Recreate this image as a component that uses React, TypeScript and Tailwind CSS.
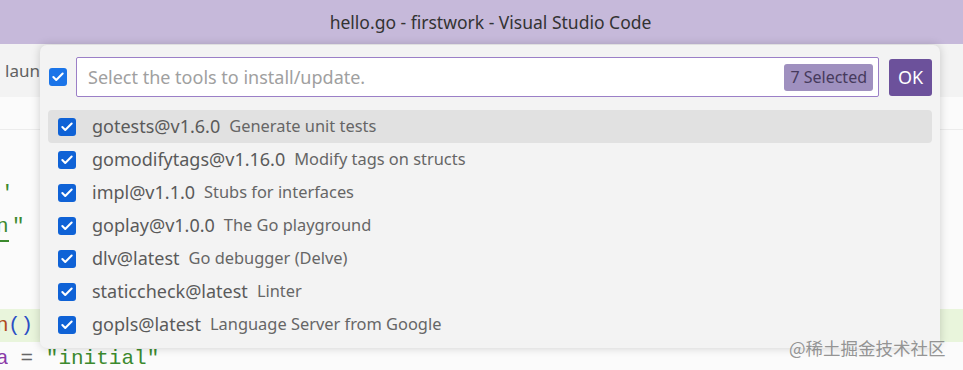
import { Check } from 'lucide-react';

const tools = [
  { name: 'gotests@v1.6.0', desc: 'Generate unit tests' },
  { name: 'gomodifytags@v1.16.0', desc: 'Modify tags on structs' },
  { name: 'impl@v1.1.0', desc: 'Stubs for interfaces' },
  { name: 'goplay@v1.0.0', desc: 'The Go playground' },
  { name: 'dlv@latest', desc: 'Go debugger (Delve)' },
  { name: 'staticcheck@latest', desc: 'Linter' },
  { name: 'gopls@latest', desc: 'Language Server from Google' },
];

function Box({ bright = false }: { bright?: boolean }) {
  return (
    <div
      className={`w-[18px] h-[18px] rounded-[3px] flex items-center justify-center shrink-0 ${
        bright ? 'bg-[#1a74e8]' : 'bg-[#0f62d6]'
      }`}
    >
      <Check size={14} strokeWidth={3.5} className="text-white" />
    </div>
  );
}

function QuickPick() {
  return (
    <div className="absolute left-[40px] top-[45px] w-[900px] h-[303px] rounded-[7px] bg-[#f3f3f3] shadow-[0_0_10px_rgba(0,0,0,0.18)] px-[8px]">
      <div className="flex items-center h-[40px] mt-[12px]">
        <div className="ml-[1px] mr-[9px]">
          <Box bright />
        </div>
        <div className="flex-1 h-[40px] bg-white border border-[#9b7fc7] rounded-[2px] flex items-center pl-[11px] pr-[5px]">
          <span className="flex-1 text-[18px] text-[#a0a0a0]">Select the tools to install/update.</span>
          <span className="h-[27px] px-[6px] rounded-[3px] bg-[#9f90bf] text-[#463a5c] text-[16px] flex items-center">
            7 Selected
          </span>
        </div>
        <button className="ml-[10px] w-[43px] h-[37px] rounded-[3px] bg-[#6c519b] text-white text-[18px] flex items-center justify-center">
          OK
        </button>
      </div>
      <div className="mt-[13px] flex flex-col">
        {tools.map((t, i) => (
          <div
            key={t.name}
            className={`flex items-center h-[33px] rounded-[4px] pl-[10px] ${i === 0 ? 'bg-[#e1e1e1]' : ''}`}
          >
            <Box />
            <span className="ml-[16px] text-[18px] text-[#5a5a5a]">{t.name}</span>
            <span className="ml-[9px] text-[16.4px] text-[#666666]">{t.desc}</span>
          </div>
        ))}
      </div>
    </div>
  );
}

export default function App() {
  return (
    <div className="relative w-[963px] h-[370px] overflow-hidden bg-[#fbfbfb] font-['Noto_Sans',sans-serif]">
      <div className="h-[44px] bg-[#c6b9da] flex items-center justify-center text-[17.5px] text-[#333333] pl-[18px]">
        hello.go - firstwork - Visual Studio Code
      </div>
      <div className="h-[53px] bg-[#f3f3f3] flex items-center pl-[5px] text-[17px] text-[#616161]">laun</div>
      <div className="h-[33px] border-b border-[#ececec]" />
      <div className="font-['Liberation_Mono',monospace] text-[21px] leading-[33px]">
        <div className="h-[33px] mt-[14px]" />
        <div className="h-[33px] pl-[1px] text-[#3c8a2e]">'</div>
        <div className="h-[33px] text-[#3c8a2e]">
          <span className="inline-block w-[12px] overflow-hidden align-top">
            <span className="inline-block -ml-[4px] border-b-2 border-[#3c8a2e] leading-[26px]">n</span>
          </span>
          "
        </div>
        <div className="h-[33px]" />
        <div className="h-[33px]" />
        <div className="h-[33px] bg-[#e9f5dc]">
          <span className="inline-block w-[8px] overflow-hidden align-top">
            <span className="inline-block -ml-[4px] text-[#b04a1c]">n</span>
          </span>
          <span className="text-[#2b4fc4]">()</span>
        </div>
        <div className="h-[33px] whitespace-pre">
          <span className="inline-block w-[8px] overflow-hidden align-top">
            <span className="inline-block -ml-[4px] text-[#8a3aa8]">a</span>
          </span>
          <span className="text-[#666666]"> = </span>
          <span className="text-[#3c8a2e]">"initial"</span>
        </div>
      </div>
      <QuickPick />
      <div className="absolute left-[789px] top-[335px] text-[17.5px] text-[#7a7a7a]/80 font-['Noto_Sans_CJK_SC',sans-serif]">
        @稀土掘金技术社区
      </div>
    </div>
  );
}
